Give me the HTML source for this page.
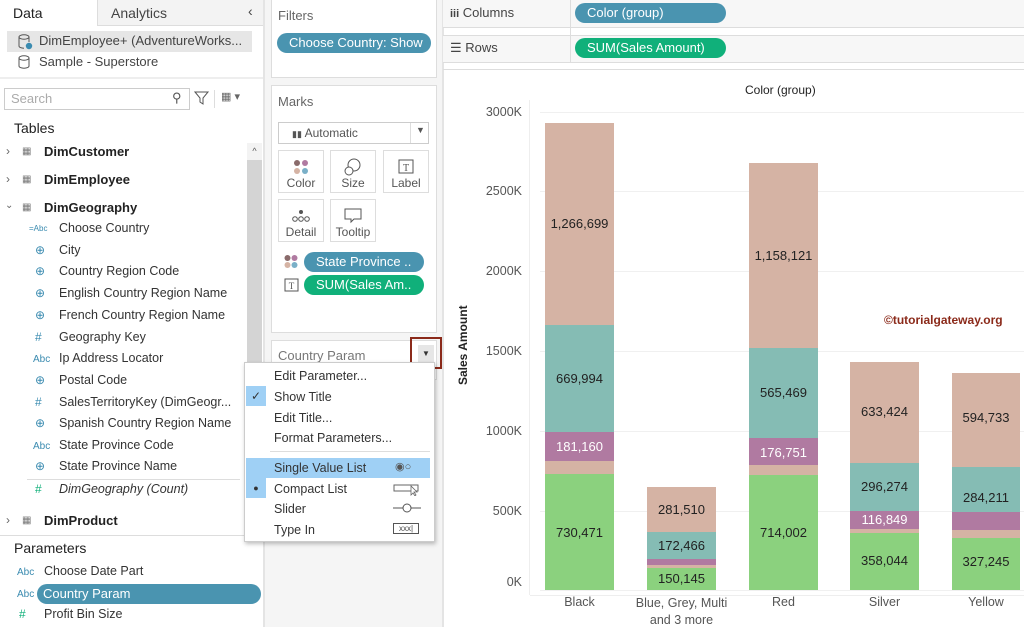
<!DOCTYPE html>
<html><head><meta charset="utf-8"><style>
*{margin:0;padding:0;box-sizing:border-box}
body{width:1024px;height:627px;overflow:hidden;background:#fff;font-family:"Liberation Sans",sans-serif;font-size:12.5px;color:#333;position:relative}
.a{position:absolute;white-space:nowrap}
.pill{position:absolute;border-radius:11px;color:#fff;font-size:13px;padding-left:12px;line-height:20px}
.blue{background:#4a94b0}.green{background:#10b07a}
.seg{position:absolute}
.lbl{position:absolute;width:100%;text-align:center;font-size:13px;color:#222}
.yl{position:absolute;right:0;font-size:12.5px;color:#555;text-align:right;width:60px}
.grid{position:absolute;left:540px;right:0;height:1px;background:#f0f0f0}
.card{position:absolute;border:1px solid #ddd;background:#fff;text-align:center;font-size:12px;color:#555}
.ic{color:#3a8bb0;font-size:10px}
</style></head><body>
<!-- left panel -->
<div class="a" style="left:0;top:0;width:263px;height:627px;background:#fff"></div>
<div class="a" style="left:97px;top:0;width:166px;height:26px;background:#f3f3f3;border-left:1px solid #ddd;border-bottom:1px solid #ddd"></div>
<div class="a" style="left:13px;top:5px;font-size:14px;color:#222">Data</div>
<div class="a" style="left:111px;top:5px;font-size:14px;color:#444">Analytics</div>
<div class="a" style="left:248px;top:3px;font-size:14px;color:#444">‹</div>
<div class="a" style="left:7px;top:31px;width:245px;height:21px;background:#e6e6e6"></div>
<svg class="a" style="left:17px;top:33px" width="16" height="17"><ellipse cx="7" cy="4" rx="5" ry="2.2" fill="none" stroke="#555"/><path d="M2 4v9c0 1.3 2.2 2.2 5 2.2M12 4v5" fill="none" stroke="#555"/><circle cx="12" cy="13" r="3.2" fill="#3a8bb0"/></svg>
<div class="a" style="left:39px;top:33px;font-size:13px;color:#444">DimEmployee+ (AdventureWorks...</div>
<svg class="a" style="left:17px;top:54px" width="14" height="16"><ellipse cx="7" cy="4" rx="5" ry="2.2" fill="none" stroke="#555"/><path d="M2 4v8c0 1.3 2.2 2.2 5 2.2s5-.9 5-2.2V4" fill="none" stroke="#555"/></svg>
<div class="a" style="left:39px;top:54px;font-size:13px;color:#444">Sample - Superstore</div>
<div class="a" style="left:0;top:77px;width:263px;height:2px;background:#eee"></div>
<div class="a" style="left:4px;top:88px;width:186px;height:22px;border:1px solid #ccc;background:#fff"></div>
<div class="a" style="left:11px;top:91px;font-size:13px;color:#aaa">Search</div>
<div class="a" style="left:172px;top:90px;font-size:13px;color:#555">⚲</div>
<svg class="a" style="left:194px;top:91px" width="16" height="15"><path d="M1 1h13l-5 6v6l-3-2V7z" fill="none" stroke="#555"/></svg>
<div class="a" style="left:214px;top:90px;width:1px;height:18px;background:#ddd"></div>
<div class="a" style="left:221px;top:90px;font-size:11px;color:#666">▦ ▾</div>
<div class="a" style="left:14px;top:120px;font-size:14px;color:#222">Tables</div>
<div class="a" style="left:247px;top:143px;width:15px;height:390px;background:#d4d4d4"></div>
<div class="a" style="left:247px;top:143px;width:15px;height:17px;background:#f3f3f3;font-size:9px;text-align:center;line-height:17px;color:#555">^</div>
<div class="a" style="left:6px;top:144px;font-size:12px;color:#666">›</div><div class="a" style="left:22px;top:146px;font-size:10px;color:#777">▦</div><div class="a" style="left:44px;top:144px;font-size:13px;font-weight:bold;color:#222">DimCustomer</div>
<div class="a" style="left:6px;top:172px;font-size:12px;color:#666">›</div><div class="a" style="left:22px;top:174px;font-size:10px;color:#777">▦</div><div class="a" style="left:44px;top:172px;font-size:13px;font-weight:bold;color:#222">DimEmployee</div>
<div class="a" style="left:5px;top:200px;font-size:10px;color:#666">⌄</div><div class="a" style="left:22px;top:202px;font-size:10px;color:#777">▦</div><div class="a" style="left:44px;top:200px;font-size:13px;font-weight:bold;color:#222">DimGeography</div>
<div class="a ic" style="left:29px;top:224px;font-size:8px">=Abc</div><div class="a" style="left:59px;top:221px">Choose Country</div>
<div class="a ic" style="left:35px;top:243px;font-size:12px">⊕</div><div class="a" style="left:59px;top:243px">City</div>
<div class="a ic" style="left:35px;top:264px;font-size:12px">⊕</div><div class="a" style="left:59px;top:264px">Country Region Code</div>
<div class="a ic" style="left:35px;top:286px;font-size:12px">⊕</div><div class="a" style="left:59px;top:286px">English Country Region Name</div>
<div class="a ic" style="left:35px;top:308px;font-size:12px">⊕</div><div class="a" style="left:59px;top:308px">French Country Region Name</div>
<div class="a ic" style="left:35px;top:330px;font-size:12px">#</div><div class="a" style="left:59px;top:330px">Geography Key</div>
<div class="a ic" style="left:33px;top:354px">Abc</div><div class="a" style="left:59px;top:351px">Ip Address Locator</div>
<div class="a ic" style="left:35px;top:373px;font-size:12px">⊕</div><div class="a" style="left:59px;top:373px">Postal Code</div>
<div class="a ic" style="left:35px;top:395px;font-size:12px">#</div><div class="a" style="left:59px;top:395px">SalesTerritoryKey (DimGeogr...</div>
<div class="a ic" style="left:35px;top:416px;font-size:12px">⊕</div><div class="a" style="left:59px;top:416px">Spanish Country Region Name</div>
<div class="a ic" style="left:33px;top:441px">Abc</div><div class="a" style="left:59px;top:438px">State Province Code</div>
<div class="a ic" style="left:35px;top:459px;font-size:12px">⊕</div><div class="a" style="left:59px;top:459px">State Province Name</div>
<div class="a" style="left:27px;top:479px;width:213px;height:1px;background:#ddd"></div>
<div class="a" style="left:35px;top:482px;font-size:12px;color:#10b07a">#</div><div class="a" style="left:59px;top:482px;font-style:italic">DimGeography (Count)</div>
<div class="a" style="left:6px;top:513px;font-size:12px;color:#666">›</div><div class="a" style="left:22px;top:515px;font-size:10px;color:#777">▦</div><div class="a" style="left:44px;top:513px;font-size:13px;font-weight:bold;color:#222">DimProduct</div>
<div class="a" style="left:0;top:535px;width:263px;height:1px;background:#ddd"></div>
<div class="a" style="left:14px;top:540px;font-size:14px;color:#222">Parameters</div>
<div class="a ic" style="left:17px;top:567px">Abc</div><div class="a" style="left:44px;top:564px">Choose Date Part</div>
<div class="a ic" style="left:17px;top:589px">Abc</div><div class="a" style="left:37px;top:584px;width:224px;height:20px;border-radius:10px;background:#4a94b0;color:#fff;padding-left:6px;line-height:20px;font-size:13px">Country Param</div>
<div class="a" style="left:19px;top:607px;font-size:12px;color:#10b07a">#</div><div class="a" style="left:44px;top:607px">Profit Bin Size</div>
<div class="a" style="left:263px;top:0;width:2px;height:627px;background:#e4e4e4"></div>
<!-- middle panel -->
<div class="a" style="left:265px;top:0;width:177px;height:627px;background:#f5f5f5"></div>
<div class="a" style="left:271px;top:-2px;width:166px;height:80px;background:#fff;border:1px solid #ddd"></div>
<div class="a" style="left:278px;top:8px;color:#666;font-size:13px">Filters</div>
<div class="pill blue" style="left:277px;top:33px;width:154px">Choose Country: Show</div>
<div class="a" style="left:271px;top:85px;width:166px;height:248px;background:#fff;border:1px solid #ddd"></div>
<div class="a" style="left:278px;top:94px;color:#666;font-size:13px">Marks</div>
<div class="a" style="left:278px;top:122px;width:151px;height:22px;border:1px solid #ccc;background:#fff"></div>
<div class="a" style="left:410px;top:123px;width:1px;height:20px;background:#ddd"></div>
<div class="a" style="left:292px;top:126px;font-size:12px;color:#555"><span style="font-size:9px">▮▮</span>  Automatic</div>
<div class="a" style="left:416px;top:125px;font-size:9px;color:#555">▼</div>
<div class="card" style="left:278px;top:150px;width:46px;height:43px"><svg width="20" height="20" style="margin-top:6px"><circle cx="6" cy="6" r="3" fill="#8a6b6b"/><circle cx="14" cy="6" r="3" fill="#b07aa1"/><circle cx="6" cy="14" r="3" fill="#d5b3a4"/><circle cx="14" cy="14" r="3" fill="#7ab0c8"/></svg><div style="margin-top:-4px">Color</div></div>
<div class="card" style="left:330px;top:150px;width:46px;height:43px"><svg width="20" height="20" style="margin-top:6px"><circle cx="11" cy="8" r="6" fill="none" stroke="#555"/><circle cx="6" cy="14" r="4" fill="#fff" stroke="#555"/></svg><div style="margin-top:-4px">Size</div></div>
<div class="card" style="left:383px;top:150px;width:46px;height:43px"><svg width="20" height="20" style="margin-top:6px"><rect x="3" y="3" width="14" height="13" fill="none" stroke="#555"/><text x="10" y="14" font-size="10" text-anchor="middle" fill="#555" font-family="Liberation Serif">T</text></svg><div style="margin-top:-4px">Label</div></div>
<div class="card" style="left:278px;top:199px;width:46px;height:43px"><svg width="20" height="20" style="margin-top:6px"><circle cx="10" cy="6" r="2" fill="#555"/><circle cx="4" cy="13" r="2.3" fill="none" stroke="#555"/><circle cx="10" cy="13" r="2.3" fill="none" stroke="#555"/><circle cx="16" cy="13" r="2.3" fill="none" stroke="#555"/></svg><div style="margin-top:-4px">Detail</div></div>
<div class="card" style="left:330px;top:199px;width:46px;height:43px"><svg width="20" height="20" style="margin-top:6px"><path d="M2 3h16v10h-7l-3 3v-3H2z" fill="none" stroke="#555"/></svg><div style="margin-top:-4px">Tooltip</div></div>
<svg class="a" style="left:284px;top:254px" width="14" height="16"><circle cx="3.5" cy="4" r="3" fill="#8a6b6b"/><circle cx="10.5" cy="4" r="3" fill="#b07aa1"/><circle cx="3.5" cy="11" r="3" fill="#d5b3a4"/><circle cx="10.5" cy="11" r="3" fill="#7ab0c8"/></svg>
<div class="pill blue" style="left:304px;top:252px;width:120px">State Province ..</div>
<svg class="a" style="left:284px;top:278px" width="16" height="14"><rect x="1" y="1" width="13" height="12" fill="none" stroke="#555"/><text x="7.5" y="11" font-size="9" text-anchor="middle" fill="#555" font-family="Liberation Serif">T</text></svg>
<div class="pill green" style="left:304px;top:275px;width:120px">SUM(Sales Am..</div>
<div class="a" style="left:271px;top:340px;width:166px;height:40px;background:#fff;border:1px solid #ddd"></div>
<div class="a" style="left:278px;top:348px;color:#777;font-size:13px">Country Param</div>
<div class="a" style="left:418px;top:345px;width:16px;height:17px;background:#e6e6e6;font-size:8px;text-align:center;line-height:17px;color:#333">▼</div>
<div class="a" style="left:410px;top:337px;width:32px;height:32px;border:2px solid #8b2a1a"></div>
<!-- dropdown menu -->
<div class="a" style="left:244px;top:362px;width:191px;height:180px;background:#fff;border:1px solid #ccc;box-shadow:1px 2px 4px rgba(0,0,0,.25)"></div>
<div class="a" style="left:274px;top:369px">Edit Parameter...</div>
<div class="a" style="left:246px;top:386px;width:20px;height:20px;background:#9fd0f5;text-align:center;line-height:20px;font-size:12px">✓</div>
<div class="a" style="left:274px;top:390px">Show Title</div>
<div class="a" style="left:274px;top:411px">Edit Title...</div>
<div class="a" style="left:274px;top:431px">Format Parameters...</div>
<div class="a" style="left:270px;top:451px;width:160px;height:1px;background:#ddd"></div>
<div class="a" style="left:246px;top:458px;width:184px;height:20px;background:#9fd0f5"></div>
<div class="a" style="left:246px;top:478px;width:20px;height:20px;background:#9fd0f5;text-align:center;line-height:20px;font-size:9px">●</div>
<div class="a" style="left:274px;top:461px">Single Value List</div>
<div class="a" style="left:395px;top:460px;font-size:11px;color:#555">◉○</div>
<div class="a" style="left:274px;top:482px">Compact List</div>
<svg class="a" style="left:393px;top:482px" width="28" height="14"><rect x="1" y="3" width="24" height="6" fill="none" stroke="#666"/><path d="M18 4l0 9 2-2 2 3 1-1-2-3h3z" fill="#fff" stroke="#666" stroke-width=".8"/></svg>
<div class="a" style="left:274px;top:502px">Slider</div>
<svg class="a" style="left:392px;top:502px" width="30" height="12"><path d="M1 6h28" stroke="#aaa" stroke-width="2"/><circle cx="15" cy="6" r="4" fill="#fff" stroke="#555"/></svg>
<div class="a" style="left:274px;top:523px">Type In</div>
<div class="a" style="left:393px;top:523px;width:26px;height:11px;border:1px solid #555;font-size:8px;line-height:9px;text-align:center;color:#444">xxx|</div>
<!-- shelves -->
<div class="a" style="left:442px;top:0;width:2px;height:627px;background:#e4e4e4"></div>
<div class="a" style="left:443px;top:0;width:581px;height:28px;background:#f7f7f7;border-bottom:1px solid #ddd"></div>
<div class="a" style="left:443px;top:35px;width:581px;height:28px;background:#f7f7f7;border:1px solid #ddd;border-left:0;border-right:0"></div>
<div class="a" style="left:570px;top:0;width:1px;height:63px;background:#ddd"></div>
<div class="a" style="left:450px;top:5px;font-size:13px;color:#444"><b style="font-size:11px">iii</b>  Columns</div>
<div class="a" style="left:450px;top:40px;font-size:13px;color:#444">☰  Rows</div>
<div class="pill blue" style="left:575px;top:3px;width:151px">Color (group)</div>
<div class="pill green" style="left:575px;top:38px;width:151px">SUM(Sales Amount)</div>
<div class="a" style="left:443px;top:69px;width:581px;height:1px;background:#ddd"></div>
<!-- chart -->
<div class="a" style="left:745px;top:83px;font-size:12px;color:#222">Color (group)</div>
<div class="a" style="left:456px;top:385px;transform:rotate(-90deg);transform-origin:0 0;font-size:12px;font-weight:bold;color:#222">Sales Amount</div>
<div class="grid" style="top:112px"></div><div class="grid" style="top:191px"></div><div class="grid" style="top:271px"></div><div class="grid" style="top:351px"></div><div class="grid" style="top:431px"></div><div class="grid" style="top:511px"></div><div class="grid" style="top:590px"></div>
<div class="a" style="left:529px;top:100px;width:1px;height:495px;background:#eee"></div>
<div class="yl" style="left:462px;top:105px">3000K</div>
<div class="yl" style="left:462px;top:184px">2500K</div>
<div class="yl" style="left:462px;top:264px">2000K</div>
<div class="yl" style="left:462px;top:344px">1500K</div>
<div class="yl" style="left:462px;top:424px">1000K</div>
<div class="yl" style="left:462px;top:504px">500K</div>
<div class="yl" style="left:462px;top:575px">0K</div>
<div class="a" style="left:884px;top:313px;font-size:12px;font-weight:bold;color:#8b2a1a">©tutorialgateway.org</div>
<!-- bars -->
<div class="a" style="left:545px;top:123px;width:69px;height:467px">
<div class="seg" style="top:0;left:0;width:100%;height:202px;background:#d5b3a4"></div>
<div class="seg" style="top:202px;left:0;width:100%;height:107px;background:#85bcb4"></div>
<div class="seg" style="top:309px;left:0;width:100%;height:29px;background:#b07aa1"></div>
<div class="seg" style="top:338px;left:0;width:100%;height:13px;background:#d5b3a4"></div>
<div class="seg" style="top:351px;left:0;width:100%;height:116px;background:#8bd17e"></div>
<div class="lbl" style="top:93px">1,266,699</div><div class="lbl" style="top:248px">669,994</div><div class="lbl" style="top:316px;color:#fff">181,160</div><div class="lbl" style="top:402px">730,471</div></div>
<div class="a" style="left:647px;top:487px;width:69px;height:103px">
<div class="seg" style="top:0;left:0;width:100%;height:45px;background:#d5b3a4"></div>
<div class="seg" style="top:45px;left:0;width:100%;height:27px;background:#85bcb4"></div>
<div class="seg" style="top:72px;left:0;width:100%;height:6px;background:#b07aa1"></div>
<div class="seg" style="top:78px;left:0;width:100%;height:3px;background:#d5b3a4"></div>
<div class="seg" style="top:81px;left:0;width:100%;height:22px;background:#8bd17e"></div>
<div class="lbl" style="top:15px">281,510</div><div class="lbl" style="top:51px">172,466</div><div class="lbl" style="top:84px">150,145</div></div>
<div class="a" style="left:749px;top:163px;width:69px;height:427px">
<div class="seg" style="top:0;left:0;width:100%;height:185px;background:#d5b3a4"></div>
<div class="seg" style="top:185px;left:0;width:100%;height:90px;background:#85bcb4"></div>
<div class="seg" style="top:275px;left:0;width:100%;height:27px;background:#b07aa1"></div>
<div class="seg" style="top:302px;left:0;width:100%;height:10px;background:#d5b3a4"></div>
<div class="seg" style="top:312px;left:0;width:100%;height:115px;background:#8bd17e"></div>
<div class="lbl" style="top:85px">1,158,121</div><div class="lbl" style="top:222px">565,469</div><div class="lbl" style="top:282px;color:#fff">176,751</div><div class="lbl" style="top:362px">714,002</div></div>
<div class="a" style="left:850px;top:362px;width:69px;height:228px">
<div class="seg" style="top:0;left:0;width:100%;height:101px;background:#d5b3a4"></div>
<div class="seg" style="top:101px;left:0;width:100%;height:48px;background:#85bcb4"></div>
<div class="seg" style="top:149px;left:0;width:100%;height:18px;background:#b07aa1"></div>
<div class="seg" style="top:167px;left:0;width:100%;height:4px;background:#d5b3a4"></div>
<div class="seg" style="top:171px;left:0;width:100%;height:57px;background:#8bd17e"></div>
<div class="lbl" style="top:42px">633,424</div><div class="lbl" style="top:117px">296,274</div><div class="lbl" style="top:150px;color:#fff">116,849</div><div class="lbl" style="top:191px">358,044</div></div>
<div class="a" style="left:952px;top:373px;width:68px;height:217px">
<div class="seg" style="top:0;left:0;width:100%;height:94px;background:#d5b3a4"></div>
<div class="seg" style="top:94px;left:0;width:100%;height:45px;background:#85bcb4"></div>
<div class="seg" style="top:139px;left:0;width:100%;height:18px;background:#b07aa1"></div>
<div class="seg" style="top:157px;left:0;width:100%;height:8px;background:#d5b3a4"></div>
<div class="seg" style="top:165px;left:0;width:100%;height:52px;background:#8bd17e"></div>
<div class="lbl" style="top:37px">594,733</div><div class="lbl" style="top:117px">284,211</div><div class="lbl" style="top:181px">327,245</div></div>
<div class="a" style="left:530px;top:595px;width:494px;height:1px;background:#eee"></div>
<div class="a" style="left:545px;top:595px;width:69px;text-align:center;color:#555;font-size:12.5px">Black</div>
<div class="a" style="left:626px;top:595px;width:111px;text-align:center;color:#555;font-size:12.5px;line-height:17px">Blue, Grey, Multi<br>and 3 more</div>
<div class="a" style="left:749px;top:595px;width:69px;text-align:center;color:#555;font-size:12.5px">Red</div>
<div class="a" style="left:850px;top:595px;width:69px;text-align:center;color:#555;font-size:12.5px">Silver</div>
<div class="a" style="left:952px;top:595px;width:68px;text-align:center;color:#555;font-size:12.5px">Yellow</div>
</body></html>
